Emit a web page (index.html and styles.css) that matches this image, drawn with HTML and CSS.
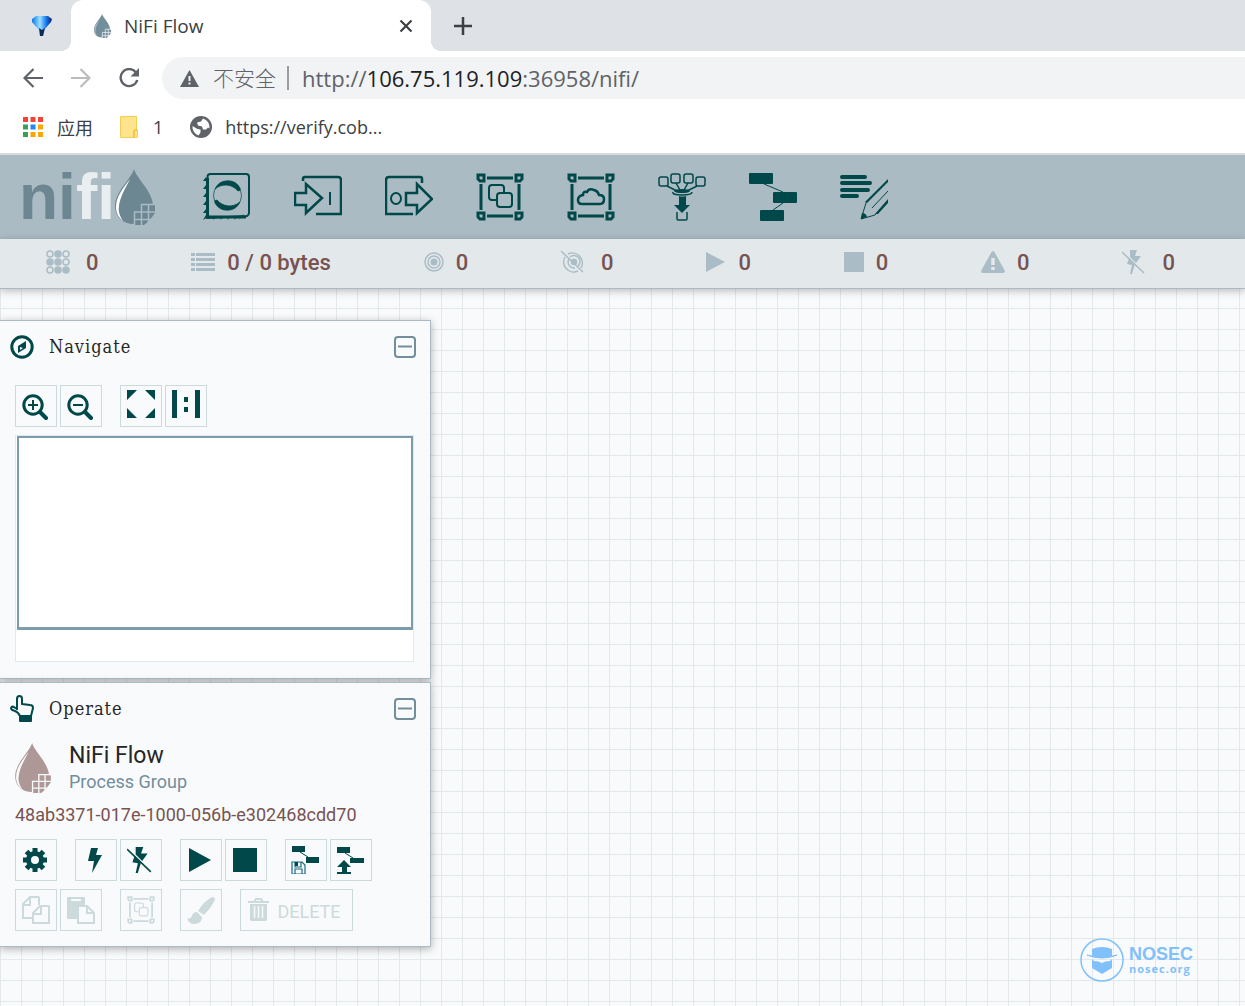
FILE: index.html
```html
<!DOCTYPE html>
<html lang="en">
<head>
<meta charset="utf-8">
<title>NiFi Flow</title>
<link rel="stylesheet" href="styles.css">
</head>
<body>
<svg class="sprite" aria-hidden="true">
  <symbol id="drop" viewBox="0 0 40 56">
    <path d="M19 0C16 10 0 23 0 37c0 11 8 18 19 18s19-7 19-18C38 23 22 10 19 0z" fill="currentColor"/>
    <path d="M15 10C9 18 1 27 1 38c0 5 2 10 7 14C5 47 3 43 4 37c1-9 6-17 11-27z" class="shine"/>
    <path d="M27 36h13v8l-6 8-5 4H20V43h7z" fill="currentColor"/>
    <path d="M40 35.500H26.500V56M40 43H19.500v13M19 50.500h19M33.500 35v19" class="cut"/>
  </symbol>
  <symbol id="group" viewBox="0 0 48 48">
    <g fill="none" stroke="currentColor" stroke-width="3"><path d="M2 2h6v6H4L2 6zM40 2h6v4l-2 2h-4zM2 40h6v6H4l-2-2zM40 40h6v4l-2 2h-4z"/><path d="M11 5h26M11 43h26M5 11v26M43 11v26"/></g>
    <g fill="none" stroke="currentColor" stroke-width="2"><path d="M20 27h-4q-3 0-3-3v-9q0-3 3-3h9q3 0 3 3v4"/><rect x="21" y="20" width="15" height="14" rx="3"/></g>
  </symbol>
  <symbol id="bolt-off" viewBox="0 0 24 24">
    <path d="M8 0h7l-2 6h6l-5 7-6-6zM7 8l6 6-3 10H8l2-9-5-1z" fill="currentColor"/><path d="M0 2l22 21" stroke="currentColor" stroke-width="1.500"/>
  </symbol>
  <symbol id="minus" viewBox="0 0 22 22"><rect x="1" y="1" width="20" height="20" rx="3" fill="none" stroke="currentColor" stroke-width="2"/><path d="M4 10.500h14" stroke="currentColor" stroke-width="2"/></symbol>
</svg>

<div class="browser">
  <div class="tabs">
    <a class="pinned" href="#" aria-label="Pinned tab"><svg width="22" height="22" viewBox="0 0 22 22"><defs><linearGradient id="gem" x1="0" x2="1"><stop offset="0" stop-color="#0a78e8"/><stop offset=".4" stop-color="#9be0ff"/><stop offset=".7" stop-color="#1a7bf0"/><stop offset="1" stop-color="#04206e"/></linearGradient></defs><path d="M5 1h12l4 3-1 3-7 8-1 6h-3l-1-6-7-8V4z" fill="url(#gem)"/><path d="M8 13l3 2 3-2-2 8h-3z" fill="#0b2c55"/></svg></a>
    <div class="tab">
      <svg class="tab-drop" width="19" height="24"><use href="#drop"/></svg>
      <span class="tab-title">NiFi Flow</span>
      <button class="plain" aria-label="Close tab"><svg width="14" height="14" viewBox="0 0 14 14"><path d="M1.500 1.500l11 11m0-11l-11 11" stroke="#3c4043" stroke-width="2.200"/></svg></button>
    </div>
    <button class="plain new-tab" aria-label="New tab"><svg width="18" height="18" viewBox="0 0 18 18"><path d="M9 0v18M0 9h18" stroke="#3c4043" stroke-width="2.500"/></svg></button>
  </div>
  <div class="address-row">
    <button class="plain" aria-label="Back"><svg width="20" height="20" viewBox="0 0 20 20"><path d="M20 10H2M10.500 1L1.500 10l9 9" fill="none" stroke="#5f6368" stroke-width="2.200"/></svg></button>
    <button class="plain" aria-label="Forward"><svg width="20" height="20" viewBox="0 0 20 20"><path d="M0 10h18M9.500 1l9 9-9 9" fill="none" stroke="#babcbe" stroke-width="2.200"/></svg></button>
    <button class="plain" aria-label="Reload"><svg width="20" height="20" viewBox="0 0 20 20"><path d="M17 4.500A8.500 8.500 0 1 0 18.300 12" fill="none" stroke="#5f6368" stroke-width="2.400"/><path d="M20 0v8.500h-8.500z" fill="#5f6368"/></svg></button>
    <div class="omnibox">
      <svg width="19" height="17" viewBox="0 0 19 17"><path d="M9.500 0L19 17H0z" fill="#5f6368"/><path d="M9.500 6v5m0 1.500v2" stroke="#f1f3f4" stroke-width="2"/></svg>
      <span class="unsafe">不安全</span>
      <div class="url" role="textbox" aria-label="Address" contenteditable="true" spellcheck="false">http://<b>106.75.119.109</b>:36958/nifi/</div>
    </div>
  </div>
  <nav class="bookmarks">
    <a href="#" class="bm-apps"><svg width="20" height="20" viewBox="0 0 20 20"><path d="M0 0h5v5H0zm7.500 0h5v5h-5zM15 0h5v5h-5z" fill="#f44336"/><path d="M0 7.500h5v5H0zM0 15h5v5H0z" fill="#34a05a"/><path d="M7.500 7.500h5v5h-5z" fill="#1e88f5"/><path d="M15 7.500h5v5h-5zM7.500 15h5v5h-5zm7.500 0h5v5h-5z" fill="#f9a602"/></svg><span>应用</span></a>
    <a href="#" class="bm-folder"><svg width="18" height="22" viewBox="0 0 18 22"><path d="M.5.500h16v14h1v7H.5z" fill="#ffe48d" stroke="#f3cf55"/><path d="M14 21v-5q0-2 2-2h1.500" fill="none" stroke="#eebf2e" stroke-width="1.500"/></svg><span>1</span></a>
    <a href="#" class="bm-site"><svg width="22" height="22" viewBox="0 0 22 22"><circle cx="11" cy="11" r="11" fill="#5f6368"/><path d="M13 2.500l-2 3-4 1 1 3 4 1 1 3h3l2-2 1.500 1A9 9 0 0 0 13 2.500zM2.500 10l5 3 3 .5v3l-2 3A9 9 0 0 1 2.500 10z" fill="#fff"/></svg><span>https://verify.cob...</span></a>
  </nav>
</div>

<header class="toolbar">
  <div class="logo"><span class="word">ni<span>fi</span></span><svg width="40" height="56"><use href="#drop"/></svg></div>
  <div class="components">
    <button class="plain" aria-label="Processor"><svg width="48" height="48" viewBox="0 0 48 48"><path d="M4.500 45V4q0-3 3-3H43q3 0 3 3v36q0 2-2 3z" fill="none" stroke="currentColor" stroke-width="2"/><path d="M4.500 5v39H43" fill="none" stroke="currentColor" stroke-width="3"/><path d="M3 4l-3 4h3m0 4l-3 4h3m0 4l-3 4h3m0 4l-3 4h3m0 4l-3 4h3m0 2l-3 5 7-4m5 0l-2 4 5-4m4 0l-2 4 5-4m4 0l-2 4 5-4m4 0l-2 4 5-4m2 0l-2 4 5-6z" fill="currentColor"/><circle cx="24.500" cy="22.500" r="14" fill="none" stroke="currentColor" stroke-width=".7"/><path d="M12 16A14 14 0 0 1 37 15q1 3-2 3A16 16 0 0 0 12 16zM37 29A14 14 0 0 1 12 30q-1-3 2-3A16 16 0 0 0 37 29z" fill="currentColor" stroke="currentColor" stroke-width=".8"/></svg></button>
    <button class="plain" aria-label="Input port"><svg width="48" height="48" viewBox="0 0 48 48"><path d="M9 8V6q0-2 2-2h33q3 0 3 3v34H22" fill="none" stroke="currentColor" stroke-width="2.500"/><path d="M1 20h11V11l16 14-16 15V32H1z" fill="none" stroke="currentColor" stroke-width="2.500"/><path d="M36 19v13" stroke="currentColor" stroke-width="2"/></svg></button>
    <button class="plain" aria-label="Output port"><svg width="48" height="48" viewBox="0 0 48 48"><path d="M37 10V6q0-2-2-2H4Q1 4 1 7v34h27" fill="none" stroke="currentColor" stroke-width="2.500"/><path d="M21 20h11V11l15 15-15 14V32H21z" fill="none" stroke="currentColor" stroke-width="2.500"/><ellipse cx="11" cy="25.500" rx="5" ry="5.500" fill="none" stroke="currentColor" stroke-width="2"/></svg></button>
    <button class="plain" aria-label="Process group"><svg width="48" height="48"><use href="#group"/></svg></button>
    <button class="plain" aria-label="Remote process group"><svg width="48" height="48" viewBox="0 0 48 48" fill="none" stroke="currentColor" stroke-width="3"><path d="M2 2h6v6H4L2 6zM40 2h6v4l-2 2h-4zM2 40h6v6H4l-2-2zM40 40h6v4l-2 2h-4z"/><path d="M11 5h26M11 43h26M5 11v26M43 11v26"/><path d="M15 31q-4 0-4-4t5-5q0-4 4-3 2-4 7-2 4 1 5 5 5 0 5 4 0 5-4 5z" stroke-width="2.500"/></svg></button>
    <button class="plain" aria-label="Funnel"><svg width="48" height="48" viewBox="0 0 48 48"><g fill="none" stroke="currentColor" stroke-width="1.500"><rect x="1" y="4" width="9" height="9" rx="2"/><rect x="13" y="1" width="9" height="9" rx="2"/><rect x="26" y="1" width="9" height="9" rx="2"/><rect x="38" y="4" width="9" height="9" rx="2"/><path d="M9 13l10 5M18 10l4 7M30 10l-4 7M39 13l-10 5M15 19q-1 3 9 3t10-3M19 39v7q0 1 1 1h8q1 0 1-1v-7"/></g><ellipse cx="24" cy="18" rx="8" ry="2" fill="currentColor"/><path d="M21 23q3 1 7 0v9h4l-8 8-8-8h5z" fill="currentColor"/></svg></button>
    <button class="plain" aria-label="Template"><svg width="48" height="48" viewBox="0 0 48 48"><g fill="currentColor"><rect width="24" height="11" rx="1"/><rect x="24" y="19" width="24" height="11" rx="1"/><rect x="11" y="37" width="24" height="11" rx="1"/></g><path d="M15 11l19 8M34 30l-10 7" stroke="currentColor"/></svg></button>
    <button class="plain" aria-label="Label"><svg width="48" height="48" viewBox="0 0 48 48"><path d="M2 4h23M2 10h28M2 17h26M2 23h15" stroke="currentColor" stroke-width="4" stroke-linecap="round"/><path d="M48 7L26 30l-5 16 14-4 13-14" fill="none" stroke="currentColor" stroke-width="1"/><path d="M48 6L25 29l2 1L48 9zM48 26L35 41h3l10-11z" fill="currentColor"/><path d="M48 18L32 35" stroke="currentColor"/><path d="M21 46l1-6q4 0 5 4z" fill="currentColor"/></svg></button>
  </div>
</header>

<div class="status">
  <div class="stat"><svg width="24" height="24" viewBox="0 0 24 24" fill="none" stroke="currentColor" stroke-width="1.500"><circle cx="4" cy="4" r="3"/><circle cx="12" cy="4" r="3" fill="currentColor"/><circle cx="20" cy="4" r="3"/><circle cx="4" cy="12" r="3" fill="currentColor"/><circle cx="12" cy="12" r="3" fill="currentColor"/><circle cx="20" cy="12" r="3"/><circle cx="4" cy="20" r="3"/><circle cx="12" cy="20" r="3" fill="currentColor"/><circle cx="20" cy="20" r="3" fill="currentColor"/></svg><span class="far">0</span></div>
  <div class="stat"><svg width="24" height="24" viewBox="0 0 24 24"><path d="M0 4.500h4m1 0h19M0 9.500h4m1 0h19M0 14.500h4m1 0h19M0 19.500h4m1 0h19" stroke="currentColor" stroke-width="3"/></svg><span>0 / 0 bytes</span></div>
  <div class="stat"><svg width="20" height="20" viewBox="0 0 20 20"><circle cx="10" cy="10" r="3.500" fill="currentColor"/><g fill="none" stroke="currentColor" stroke-width="1.500"><circle cx="10" cy="10" r="6"/><circle cx="10" cy="10" r="9"/></g></svg><span>0</span></div>
  <div class="stat"><svg width="24" height="24" viewBox="0 0 24 24" fill="none" stroke="currentColor" stroke-width="1.500"><circle cx="13" cy="12" r="2.500" fill="currentColor"/><path d="M9 7a6 6 0 0 1 8 9M8 9a6 6 0 0 0 6 9M7 4a10 10 0 0 1 13 14M4 7a10 10 0 0 0 13 14M0 1l22 21"/></svg><span class="far">0</span></div>
  <div class="stat"><svg width="20" height="20" viewBox="0 0 20 20"><path d="M0 0l19 10L0 20z" fill="currentColor"/></svg><span>0</span></div>
  <div class="stat"><svg width="20" height="20" viewBox="0 0 20 20"><path d="M0 0h20v20H0z" fill="currentColor"/></svg><span>0</span></div>
  <div class="stat"><svg width="24" height="24" viewBox="0 0 24 24"><path d="M12 1q1 0 2 2l10 18q0 2-2 2H2q-2 0-2-2L10 3q1-2 2-2z" fill="currentColor"/><path d="M12 8v7m0 2v3" stroke="#e3e8eb" stroke-width="3.500"/></svg><span>0</span></div>
  <div class="stat"><svg width="24" height="24"><use href="#bolt-off"/></svg><span class="far">0</span></div>
</div>

<main class="canvas">
  <section class="panel navigate">
    <div class="panel-head">
      <svg width="24" height="24" viewBox="0 0 24 24"><circle cx="12" cy="12" r="10.200" fill="none" stroke="currentColor" stroke-width="3"/><path d="M16 6v7l-8 5v-7z" fill="currentColor"/><path d="M10 12l3 1-3 2z" fill="#f9fafb"/></svg>
      <h2>Navigate</h2>
      <button class="plain fold" aria-label="Collapse Navigate"><svg width="22" height="22"><use href="#minus"/></svg></button>
    </div>
    <div class="tools">
      <div class="set low">
        <button class="tool" aria-label="Zoom in"><svg width="26" height="26" viewBox="0 0 26 26" fill="none" stroke="currentColor"><circle cx="11" cy="11" r="9.200" stroke-width="3"/><path d="M6 11h10M11 6v10" stroke-width="2"/><path d="M18 18l6 6" stroke-width="4" stroke-linecap="round"/></svg></button>
        <button class="tool" aria-label="Zoom out"><svg width="26" height="26" viewBox="0 0 26 26" fill="none" stroke="currentColor"><circle cx="11" cy="11" r="9.200" stroke-width="3"/><path d="M6 11h10" stroke-width="2"/><path d="M18 18l6 6" stroke-width="4" stroke-linecap="round"/></svg></button>
      </div>
      <div class="set high">
        <button class="tool" aria-label="Fit"><svg width="28" height="28" viewBox="0 0 28 28"><path d="M0 0h10L0 10zM18 0h10v10zM0 18l10 10H0zM28 18v10H18z" fill="currentColor"/></svg></button>
        <button class="tool" aria-label="Actual size"><svg width="28" height="28" viewBox="0 0 28 28"><path d="M0 0h5v28H0zM23 0h5v28h-5zM12 7h4v5h-4zM12 17h4v5h-4z" fill="currentColor"/></svg></button>
      </div>
    </div>
    <div class="birdseye"><div class="viewport"></div></div>
  </section>

  <section class="panel operate">
    <div class="panel-head">
      <svg width="24" height="28" viewBox="0 0 24 28"><path d="M7 15V4q0-3 2.500-3T12 4v5l8 1q3 0 3 3l-2 8H10Q8 17 5 16q-4-1-4-3 1-2 3-1l3 2" fill="none" stroke="currentColor" stroke-width="2" stroke-linejoin="round"/><path d="M9 21h13v5q0 1-1 1H10q-1 0-1-1z" fill="currentColor"/></svg>
      <h2>Operate</h2>
      <button class="plain fold" aria-label="Collapse Operate"><svg width="22" height="22"><use href="#minus"/></svg></button>
    </div>
    <div class="context">
      <svg width="36" height="50"><use href="#drop"/></svg>
      <div><div class="name">NiFi Flow</div><div class="kind">Process Group</div></div>
    </div>
    <div class="uuid">48ab3371-017e-1000-056b-e302468cdd70</div>
    <div class="tools">
      <div class="set">
        <button class="tool" aria-label="Configure"><svg width="24" height="24" viewBox="0 0 24 24"><g stroke="currentColor" stroke-width="5"><path d="M12 0v24M0 12h24M3.500 3.500l17 17M20.500 3.500l-17 17"/></g><circle cx="12" cy="12" r="6.500" fill="#f9fafb" stroke="currentColor" stroke-width="5"/></svg></button>
      </div>
      <div class="set">
        <button class="tool" aria-label="Enable"><svg width="24" height="26" viewBox="0 0 24 26"><path d="M8 1h7l-2 7h6L9 26l2-12H5z" fill="currentColor"/></svg></button>
        <button class="tool" aria-label="Disable"><svg width="26" height="28" viewBox="0 0 24 24"><use href="#bolt-off"/></svg></button>
      </div>
      <div class="set">
        <button class="tool" aria-label="Start"><svg width="24" height="24" viewBox="0 0 24 24"><path d="M1 0l22 12L1 24z" fill="currentColor"/></svg></button>
        <button class="tool" aria-label="Stop"><svg width="24" height="24" viewBox="0 0 24 24"><path d="M0 0h24v24H0z" fill="currentColor"/></svg></button>
      </div>
      <div class="set">
        <button class="tool" aria-label="Create template"><svg width="28" height="28" viewBox="0 0 28 28"><path d="M1 0h13v6H1zM15 11h13v6H15z" fill="currentColor"/><path d="M9 6l8 5" stroke="currentColor"/><path d="M1 16h10l3 3v9H1zM4 16v5h6v-5M4 28v-5h7v5" fill="none" stroke="#1b6a86" stroke-width="1.200"/><path d="M4 16h3v4H4z" fill="currentColor"/></svg></button>
        <button class="tool" aria-label="Upload template"><svg width="28" height="28" viewBox="0 0 28 28"><path d="M1 1h13v6H1zM14 12h14v5H14zM8 14l7 7h-4v5H6v-5H1zM1 26h14v2H1z" fill="currentColor"/><path d="M9 7l8 5" stroke="currentColor"/></svg></button>
      </div>
    </div>
    <div class="tools">
      <div class="set">
        <button class="tool" disabled aria-label="Copy"><svg width="28" height="28" viewBox="0 0 28 28" fill="none" stroke="currentColor" stroke-width="2"><path d="M10 22H1V8l7-7h8q1 0 1 1v7M1 9h7V1"/><path d="M11 17l7-7h8q1 0 1 1v16H11zM11 18h8v-8"/></svg></button>
        <button class="tool" disabled aria-label="Paste"><svg width="28" height="28" viewBox="0 0 28 28"><path d="M0 2q0-1 1-1h16q1 0 1 1v7h-7v14H1q-1 0-1-1z" fill="currentColor"/><path d="M4 4h10" stroke="#f9fafb" stroke-width="2"/><path d="M11 10h9l7 7v10H11zM20 10v7h7" fill="#f9fafb" stroke="currentColor" stroke-width="2"/></svg></button>
      </div>
      <div class="set">
        <button class="tool" disabled aria-label="Group"><svg width="28" height="28"><use href="#group"/></svg></button>
      </div>
      <div class="set">
        <button class="tool" disabled aria-label="Change color"><svg width="28" height="28" viewBox="0 0 28 28"><path d="M25 1q3 0 3 3-4 8-11 15l-6-4Q17 5 25 1zM10 16l5 5q0 7-8 7-5 0-7-6 3 2 5-2 1-4 5-4z" fill="currentColor"/></svg></button>
      </div>
      <div class="set">
        <button class="tool delete" disabled><svg width="21" height="24" viewBox="0 0 21 24"><path d="M0 4h21M6 4l2-3h5l2 3" fill="none" stroke="currentColor" stroke-width="2"/><path d="M2 6h17v16q0 1-2 1H4q-2 0-2-1z" fill="currentColor"/><path d="M6.500 8v12M10.500 8v12M14.500 8v12" stroke="#f9fafb" stroke-width="1.500"/></svg><span>DELETE</span></button>
      </div>
    </div>
  </section>

  <div class="watermark">
    <svg width="44" height="44" viewBox="0 0 44 44"><circle cx="22" cy="22" r="21" fill="none" stroke="currentColor" stroke-width="1.500"/><path d="M12 11q10-4 20 0v7q-10 3-20 0z" fill="currentColor"/><path d="M7 17q15 5 30 0-15 6-30 0z" fill="currentColor" stroke="currentColor"/><path d="M12 21l2 2q5 0 8 2 3-2 8-2l2-2v9l-10 6-10-6z" fill="currentColor"/></svg>
    <div><div class="wm-name">NOSEC</div><div class="wm-site">nosec.org</div></div>
  </div>
</main>
</body>
</html>
```
FILE: styles.css
```css
* { box-sizing: border-box; }
body {
  margin: 0;
  min-height: 100vh;
  display: flex;
  flex-direction: column;
  overflow-x: hidden;
  font-family: Roboto, "Liberation Sans", sans-serif;
  color: #004849;
  background: #fff;
}
svg { display: block; flex: none; }
a { color: inherit; text-decoration: none; }
.sprite { position: absolute; width: 0; height: 0; }
.plain { border: 0; padding: 0; background: none; color: inherit; }
.shine { fill: var(--shine); }
.cut { fill: none; stroke: var(--bg); stroke-width: 1.5; }

/* Browser chrome */
.browser {
  font-family: "Open Sans", "Noto Sans CJK SC", sans-serif;
  color: #3c4043;
  border-bottom: 2px solid #dadada;
}
.tabs { display: flex; align-items: center; height: 51px; background: #dee1e6; }
.pinned { width: 71px; padding-left: 31px; }
.tab {
  position: relative;
  display: flex;
  align-items: center;
  width: 360px;
  height: 51px;
  padding: 0 18px 0 22px;
  border-radius: 12px 12px 0 0;
  background: #fff;
}
.tab::before, .tab::after {
  content: "";
  position: absolute;
  bottom: 0;
  width: 10px;
  height: 10px;
}
.tab::before { left: -10px; background: radial-gradient(circle at 0 0, transparent 10px, #fff 10px); }
.tab::after { right: -10px; background: radial-gradient(circle at 100% 0, transparent 10px, #fff 10px); }
.tab-drop { color: #728e9b; --bg: #fff; --shine: #aabbc3; }
.tab-title { flex: 1; padding-left: 12px; font-size: 19px; }
.new-tab { margin-left: 23px; }
.address-row { display: flex; align-items: center; gap: 28px; height: 54px; padding-left: 23px; }
.omnibox {
  flex: 1;
  display: flex;
  align-items: center;
  height: 42px;
  margin-left: -5px;
  padding-left: 18px;
  border-radius: 21px 0 0 21px;
  background: #f1f3f4;
  color: #5f6368;
}
.unsafe { margin-left: 14px; padding-right: 11px; border-right: 2px solid #9a9da1; font-size: 21px; line-height: 24px; font-weight: 300; }
.url { padding-left: 13px; font-size: 22px; line-height: 24px; }
.url b { font-weight: 400; color: #202124; }
.bookmarks { display: flex; align-items: center; height: 48px; padding: 0 0 5px 23px; font-size: 18px; }
.bookmarks a { display: flex; align-items: center; }
.bm-apps { gap: 14px; }
.bm-folder { gap: 15px; margin-left: 27px; }
.bm-site { gap: 13px; margin-left: 27px; }

/* Component toolbar */
.toolbar { display: flex; align-items: center; height: 84px; padding-left: 19px; background: #aabbc3; }
.logo { display: flex; align-items: center; width: 184px; color: #6c8792; --bg: #aabbc3; --shine: #fff; }
.word { font: 700 64px/84px "Liberation Sans", sans-serif; }
.word span { color: #e9eef1; }
.components { display: flex; gap: 43px; }

/* Flow status */
.status {
  position: relative;
  z-index: 1;
  display: flex;
  justify-content: space-between;
  align-items: center;
  height: 50px;
  padding: 0 70px 3px 46px;
  border-bottom: 1px solid #aabbc3;
  background: #e3e8eb;
  box-shadow: 0 2px 8px rgba(0, 0, 0, .25);
}
.stat { display: flex; align-items: center; gap: 12px; color: #aabdc6; }
.stat span { font-size: 22px; font-weight: 500; color: #775351; }
.stat .far { padding-left: 4px; }

/* Canvas with its grid */
.canvas {
  position: relative;
  flex: 1;
  padding: 31px 0 59px;
  background: linear-gradient(90deg, #e3e8eb 1px, transparent 1px) 0 0 / 21px 21px,
    linear-gradient(#e3e8eb 1px, transparent 1px) 0 19px / 21px 21px, #f9fafc;
}
.panel {
  width: 431px;
  padding: 0 16px 15px 15px;
  border: 1px solid #aabbc3;
  border-left: 0;
  background: rgba(249, 250, 251, .95);
  box-shadow: 0 2px 8px rgba(0, 0, 0, .3);
}
.navigate { padding-bottom: 16px; }
.operate { margin-top: 3px; }
.panel-head { display: flex; align-items: center; height: 52px; margin-left: -5px; }
.panel-head h2 {
  flex: 1;
  margin: 0;
  padding-left: 15px;
  font: 400 18px/24px "Roboto Slab", "DejaVu Serif Condensed", "DejaVu Serif", serif;
  letter-spacing: 1px;
  color: #262626;
}
.fold { color: #728e9b; margin-right: -2px; }
.tools { display: flex; gap: 18px; }
.set { display: flex; gap: 3px; }
.tool {
  display: flex;
  align-items: center;
  justify-content: center;
  width: 42px;
  height: 42px;
  padding: 0 2px 0 0;
  border: 1px solid #ccdadb;
  background: transparent;
  color: #004849;
}
.tool:disabled { padding: 0; color: #ccdadb; }
.navigate .tools { padding-top: 12px; }
.low .tool { padding-top: 2px; }
.high .tool { padding: 0 0 4px; }
.birdseye { height: 227px; margin-top: 8px; padding-left: 1px; border: 1px solid #e3e8eb; background: #fff; }
.viewport { height: 194px; border: 2px solid #7b9cad; border-bottom-width: 3px; }
.context { display: flex; align-items: center; height: 60px; gap: 18px; padding-top: 6px; color: #ad9897; --bg: #f9fafb; --shine: #f9fafb; }
.name { font-size: 23px; line-height: 28px; color: #262626; }
.kind { font-size: 18px; line-height: 24px; color: #728e9b; }
.uuid { height: 44px; padding-top: 8px; font-size: 18px; line-height: 24px; color: #775351; }
.operate .tools + .tools { margin-top: 8px; }
.tool.delete { width: 113px; gap: 8px; padding-right: 4px; font: 400 18px/24px Roboto, sans-serif; }
.delete span { padding-top: 3px; }

.watermark {
  position: absolute;
  right: 52px;
  bottom: 24px;
  display: flex;
  align-items: center;
  gap: 5px;
  color: #80c0fb;
}
.wm-name { font: 700 18px/18px "Liberation Sans", sans-serif; }
.wm-site { font: 700 11px/12px "Open Sans", sans-serif; letter-spacing: 1px; }
```
